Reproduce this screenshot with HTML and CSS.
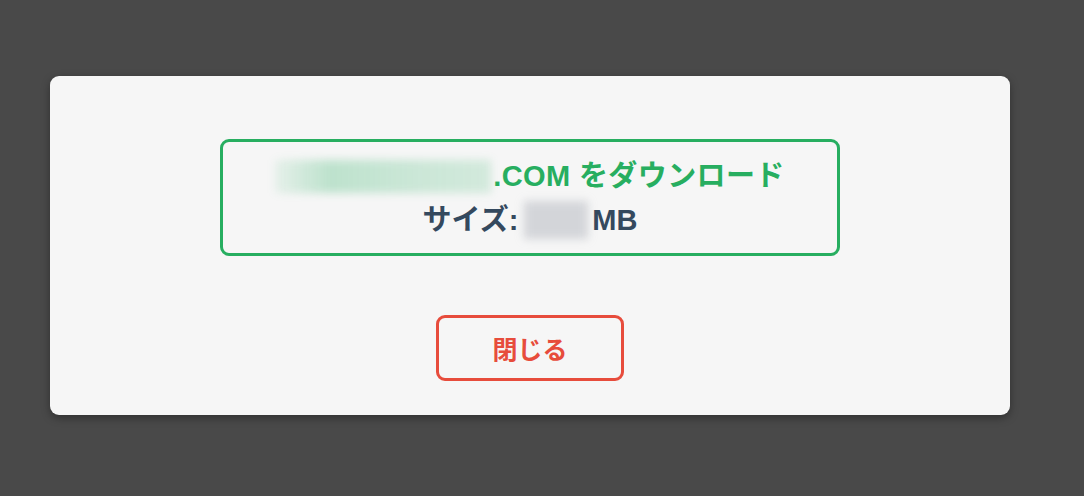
FILE: index.html
```html
<!DOCTYPE html>
<html lang="ja">
<head>
<meta charset="utf-8">
<link rel="stylesheet" href="styles.css">
</head>
<body>
<div class="card">
  <div class="info">
    <div class="title"><span class="blur blur-green"></span>.COM をダウンロード</div>
    <div class="size">サイズ:<span class="blur blur-gray"></span>MB</div>
  </div>
  <button class="close">閉じる</button>
</div>
</body>
</html>
```
FILE: styles.css
```css
html, body {
  margin: 0;
  padding: 0;
  background: #494949;
  width: 1084px;
  height: 496px;
  overflow: hidden;
  font-family: "Liberation Sans", "Noto Sans CJK JP", sans-serif;
}
.card {
  margin: 76px 0 0 50px;
  width: 960px;
  height: 339px;
  box-sizing: border-box;
  background: #f6f6f6;
  border-radius: 9px;
  box-shadow: 0 3px 8px rgba(0,0,0,0.35);
  display: flex;
  flex-direction: column;
  align-items: center;
  padding-top: 63px;
}
.info {
  width: 620px;
  height: 117px;
  box-sizing: border-box;
  border: 3px solid #27ae60;
  border-radius: 9px;
  padding: 12px 0 0;
  text-align: center;
  font-weight: 700;
  font-size: 29px;
  line-height: 44px;
}
.title {
  color: #27ae60;
  display: flex;
  justify-content: center;
  align-items: center;
  letter-spacing: 0.4px;
}
.size {
  color: #34495e;
  display: flex;
  justify-content: center;
  align-items: center;
}
.blur {
  display: inline-block;
  filter: blur(4px);
}
.blur-green {
  width: 216px;
  height: 33px;
  margin-right: 2px;
  background: linear-gradient(90deg, rgba(39,174,96,0.08), rgba(39,174,96,0.27) 25%, rgba(39,174,96,0.2) 70%, rgba(39,174,96,0.17));
}
.blur-gray {
  width: 64px;
  height: 38px;
  background: rgba(160,165,175,0.4);
  margin: 0 4px 0 6px;
}
.close {
  margin-top: 59px;
  width: 188px;
  height: 66px;
  box-sizing: border-box;
  border: 3px solid #e74c3c;
  border-radius: 9px;
  background: transparent;
  color: #e74c3c;
  font-family: "Liberation Sans", "Noto Sans CJK JP", sans-serif;
  font-weight: 700;
  font-size: 25px;
  padding: 0;
}
```
